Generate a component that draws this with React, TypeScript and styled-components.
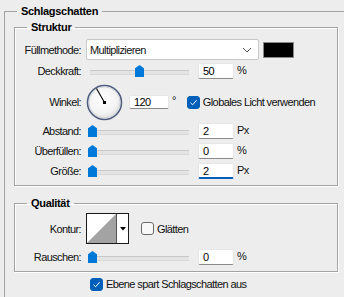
import React from 'react';
import styled, { createGlobalStyle } from 'styled-components';

const Global = createGlobalStyle`
  html, body { margin: 0; padding: 0; background: #ededed; overflow: hidden; }
  body {
    font-family: "Liberation Sans", Arial, sans-serif;
    font-size: 11px;
    letter-spacing: -0.6px;
    color: #111;
  }
  #root { width: 344px; height: 297px; overflow: hidden; }
`;

const Group = styled.fieldset<{ $outer?: boolean }>`
  min-width: 0;
  box-sizing: border-box;
  margin: ${(p) => (p.$outer ? '5px 0 0 4px' : '0')};
  width: ${(p) => (p.$outer ? '400px' : '324px')};
  padding: ${(p) => (p.$outer ? '0 0 0 9px' : '0')};
  border: 1px solid #a3a3a3;
  border-right: ${(p) => (p.$outer ? 'none' : '1px solid #a3a3a3')};
  border-bottom: ${(p) => (p.$outer ? 'none' : '1px solid #a3a3a3')};
  box-shadow: ${(p) => (p.$outer ? 'none' : '1px 1px 0 #fff, inset 1px 1px 0 #fff')};
  height: ${(p) => (p.$outer ? '320px' : 'auto')};
`;

const Legend = styled.legend<{ $outer?: boolean }>`
  margin-left: ${(p) => (p.$outer ? '3px' : '12px')};
  padding: 0 4px;
  font-weight: bold;
  font-size: 11px;
  line-height: 13px;
  letter-spacing: -0.3px;
  color: #000;
`;

const Body = styled.div<{ $top: number; $bottom: number }>`
  padding: ${(p) => p.$top}px 0 ${(p) => p.$bottom}px 0;
  display: flex;
  flex-direction: column;
`;

const StrukturGroup = styled(Group)`
  margin-top: 3px;
`;

const QualitaetGroup = styled(Group)`
  margin-top: 11px;
`;

const Row = styled.div<{ $h: number; $mt?: number }>`
  display: flex;
  align-items: center;
  height: ${(p) => p.$h}px;
  margin-top: ${(p) => p.$mt ?? 0}px;
`;

const Label = styled.span`
  width: 66px;
  margin-right: 5px;
  text-align: right;
  white-space: nowrap;
  flex-shrink: 0;
`;

const Select = styled.div`
  box-sizing: border-box;
  width: 173px;
  height: 21px;
  background: #fff;
  border: 1px solid #c8c8c8;
  border-radius: 2px;
  display: flex;
  align-items: center;
  justify-content: space-between;
  padding: 0 6px 0 3px;
`;

const Swatch = styled.div`
  box-sizing: border-box;
  width: 31px;
  height: 16px;
  margin-left: 4px;
  background: #000;
  border: 1px solid #8a8a8a;
`;

const SliderBox = styled.div`
  position: relative;
  width: 101px;
  height: 14px;
  margin-left: 2px;
  flex-shrink: 0;
`;

const Track = styled.div`
  position: absolute;
  left: 2px;
  right: 0;
  top: 6px;
  height: 3px;
  background: #e4e4e4;
  border-top: 1px solid #c9c9c9;
  border-bottom: 1px solid #d8d8d8;
`;

const Thumb = styled.div`
  position: absolute;
  top: 1px;
  width: 9px;
  height: 12px;
  background: #0078d7;
  clip-path: polygon(50% 0, 100% 28%, 100% 100%, 0 100%, 0 28%);
`;

const Field = styled.div<{ $w: number; $h?: number; $focus?: boolean }>`
  box-sizing: border-box;
  width: ${(p) => p.$w}px;
  height: ${(p) => p.$h ?? 16}px;
  margin-left: 9px;
  background: #fff;
  border: 1px solid #e6e6e6;
  border-bottom: ${(p) => (p.$focus ? '2px solid #005fb8' : '1px solid #8a8a8a')};
  border-radius: 2px;
  padding: 0 4px;
  display: flex;
  align-items: center;
  color: #000;
  flex-shrink: 0;
`;

const AngleField = styled(Field)`
  margin-left: 6px;
`;

const Unit = styled.span`
  margin-left: 3px;
  align-self: flex-start;
  margin-top: 3px;
`;

const Degree = styled.span`
  margin-left: 3px;
  align-self: flex-start;
  margin-top: 11px;
`;

const CheckLabel = styled.label<{ $ml: number }>`
  display: flex;
  align-items: center;
  margin-left: ${(p) => p.$ml}px;
  gap: 3px;
  white-space: nowrap;
`;

const Box = styled.span<{ $checked?: boolean }>`
  box-sizing: border-box;
  width: 13px;
  height: 13px;
  border-radius: 3px;
  display: inline-flex;
  align-items: center;
  justify-content: center;
  background: ${(p) => (p.$checked ? '#005fb8' : '#f8f8f8')};
  border: 1px solid ${(p) => (p.$checked ? '#005fb8' : '#6a6a6a')};
`;

const ContourButton = styled.div`
  box-sizing: border-box;
  width: 43px;
  height: 31px;
  border: 1px solid #1a1a1a;
  background: #fff;
  display: flex;
`;

const ContourPreview = styled.div`
  width: 29px;
  height: 29px;
  border-right: 1px solid #555;
`;

const ContourArrow = styled.div`
  flex: 1;
  display: flex;
  align-items: center;
  justify-content: center;
`;

const BottomRow = styled(Row)`
  padding-left: 76px;
`;

function Check({ checked }: { checked?: boolean }) {
  return (
    <Box $checked={checked}>
      {checked && (
        <svg width="9" height="9" viewBox="0 0 9 9">
          <path d="M1.5 4.8 L3.6 6.8 L7.6 2.2" fill="none" stroke="#fff" strokeWidth="1" />
        </svg>
      )}
    </Box>
  );
}

function Slider({ value }: { value: number }) {
  return (
    <SliderBox>
      <Track />
      <Thumb style={{ left: `${Math.round(value * 94)}px` }} />
    </SliderBox>
  );
}

function Dial() {
  return (
    <svg width="37" height="37" viewBox="0 0 37 37">
      <defs>
        <radialGradient id="dg" cx="45%" cy="40%" r="60%">
          <stop offset="0%" stopColor="#ffffff" />
          <stop offset="70%" stopColor="#f3f3f3" />
          <stop offset="100%" stopColor="#dcdcdc" />
        </radialGradient>
      </defs>
      <circle cx="18.5" cy="18.5" r="17" fill="url(#dg)" stroke="#4e5d7e" strokeWidth="1.6" />
      <circle cx="18.5" cy="18.5" r="15.6" fill="none" stroke="#c9ced8" strokeWidth="0.8" />
      <line x1="18.5" y1="18.5" x2="10.5" y2="4.6" stroke="#000" strokeWidth="1.1" />
      <rect x="17" y="17" width="3" height="3" fill="#000" />
    </svg>
  );
}

function ValueRow({ label, value, text, unit, focus, mt }: { label: string; value: number; text: string; unit: string; focus?: boolean; mt?: number }) {
  return (
    <Row $h={20} $mt={mt}>
      <Label>{label}</Label>
      <Slider value={value} />
      <Field $w={36} $focus={focus}>{text}</Field>
      <Unit>{unit}</Unit>
    </Row>
  );
}

export default function App() {
  return (
    <>
      <Global />
      <Group $outer>
        <Legend $outer>Schlagschatten</Legend>
        <StrukturGroup>
          <Legend>Struktur</Legend>
          <Body $top={5} $bottom={4}>
            <Row $h={21}>
              <Label>Füllmethode:</Label>
              <Select>
                <span>Multiplizieren</span>
                <svg width="10" height="6" viewBox="0 0 10 6">
                  <path d="M1 1 L5 5 L9 1" fill="none" stroke="#555" strokeWidth="1" />
                </svg>
              </Select>
              <Swatch />
            </Row>
            <ValueRow label="Deckkraft:" value={0.5} text="50" unit="%" mt={1} />
            <Row $h={38} $mt={2}>
              <Label>Winkel:</Label>
              <Dial />
              <AngleField $w={40} $h={14}>120</AngleField>
              <Degree>°</Degree>
              <CheckLabel $ml={11}>
                <Check checked />
                <span>Globales Licht verwenden</span>
              </CheckLabel>
            </Row>
            <ValueRow label="Abstand:" value={0} text="2" unit="Px" />
            <ValueRow label="Überfüllen:" value={0} text="0" unit="%" />
            <ValueRow label="Größe:" value={0} text="2" unit="Px" focus />
          </Body>
        </StrukturGroup>
        <QualitaetGroup>
          <Legend>Qualität</Legend>
          <Body $top={3} $bottom={4}>
            <Row $h={31}>
              <Label>Kontur:</Label>
              <ContourButton>
                <ContourPreview>
                  <svg width="29" height="29" viewBox="0 0 29 29">
                    <polygon points="0,29 29,0 29,29" fill="#a3a3a3" />
                  </svg>
                </ContourPreview>
                <ContourArrow>
                  <svg width="6" height="4" viewBox="0 0 6 4">
                    <polygon points="0,0 6,0 3,3.5" fill="#000" />
                  </svg>
                </ContourArrow>
              </ContourButton>
              <CheckLabel $ml={12}>
                <Check />
                <span>Glätten</span>
              </CheckLabel>
            </Row>
            <ValueRow label="Rauschen:" value={0} text="0" unit="%" mt={3} />
          </Body>
        </QualitaetGroup>
        <BottomRow $h={20} $mt={2}>
          <CheckLabel $ml={0}>
            <Check checked />
            <span>Ebene spart Schlagschatten aus</span>
          </CheckLabel>
        </BottomRow>
      </Group>
    </>
  );
}
